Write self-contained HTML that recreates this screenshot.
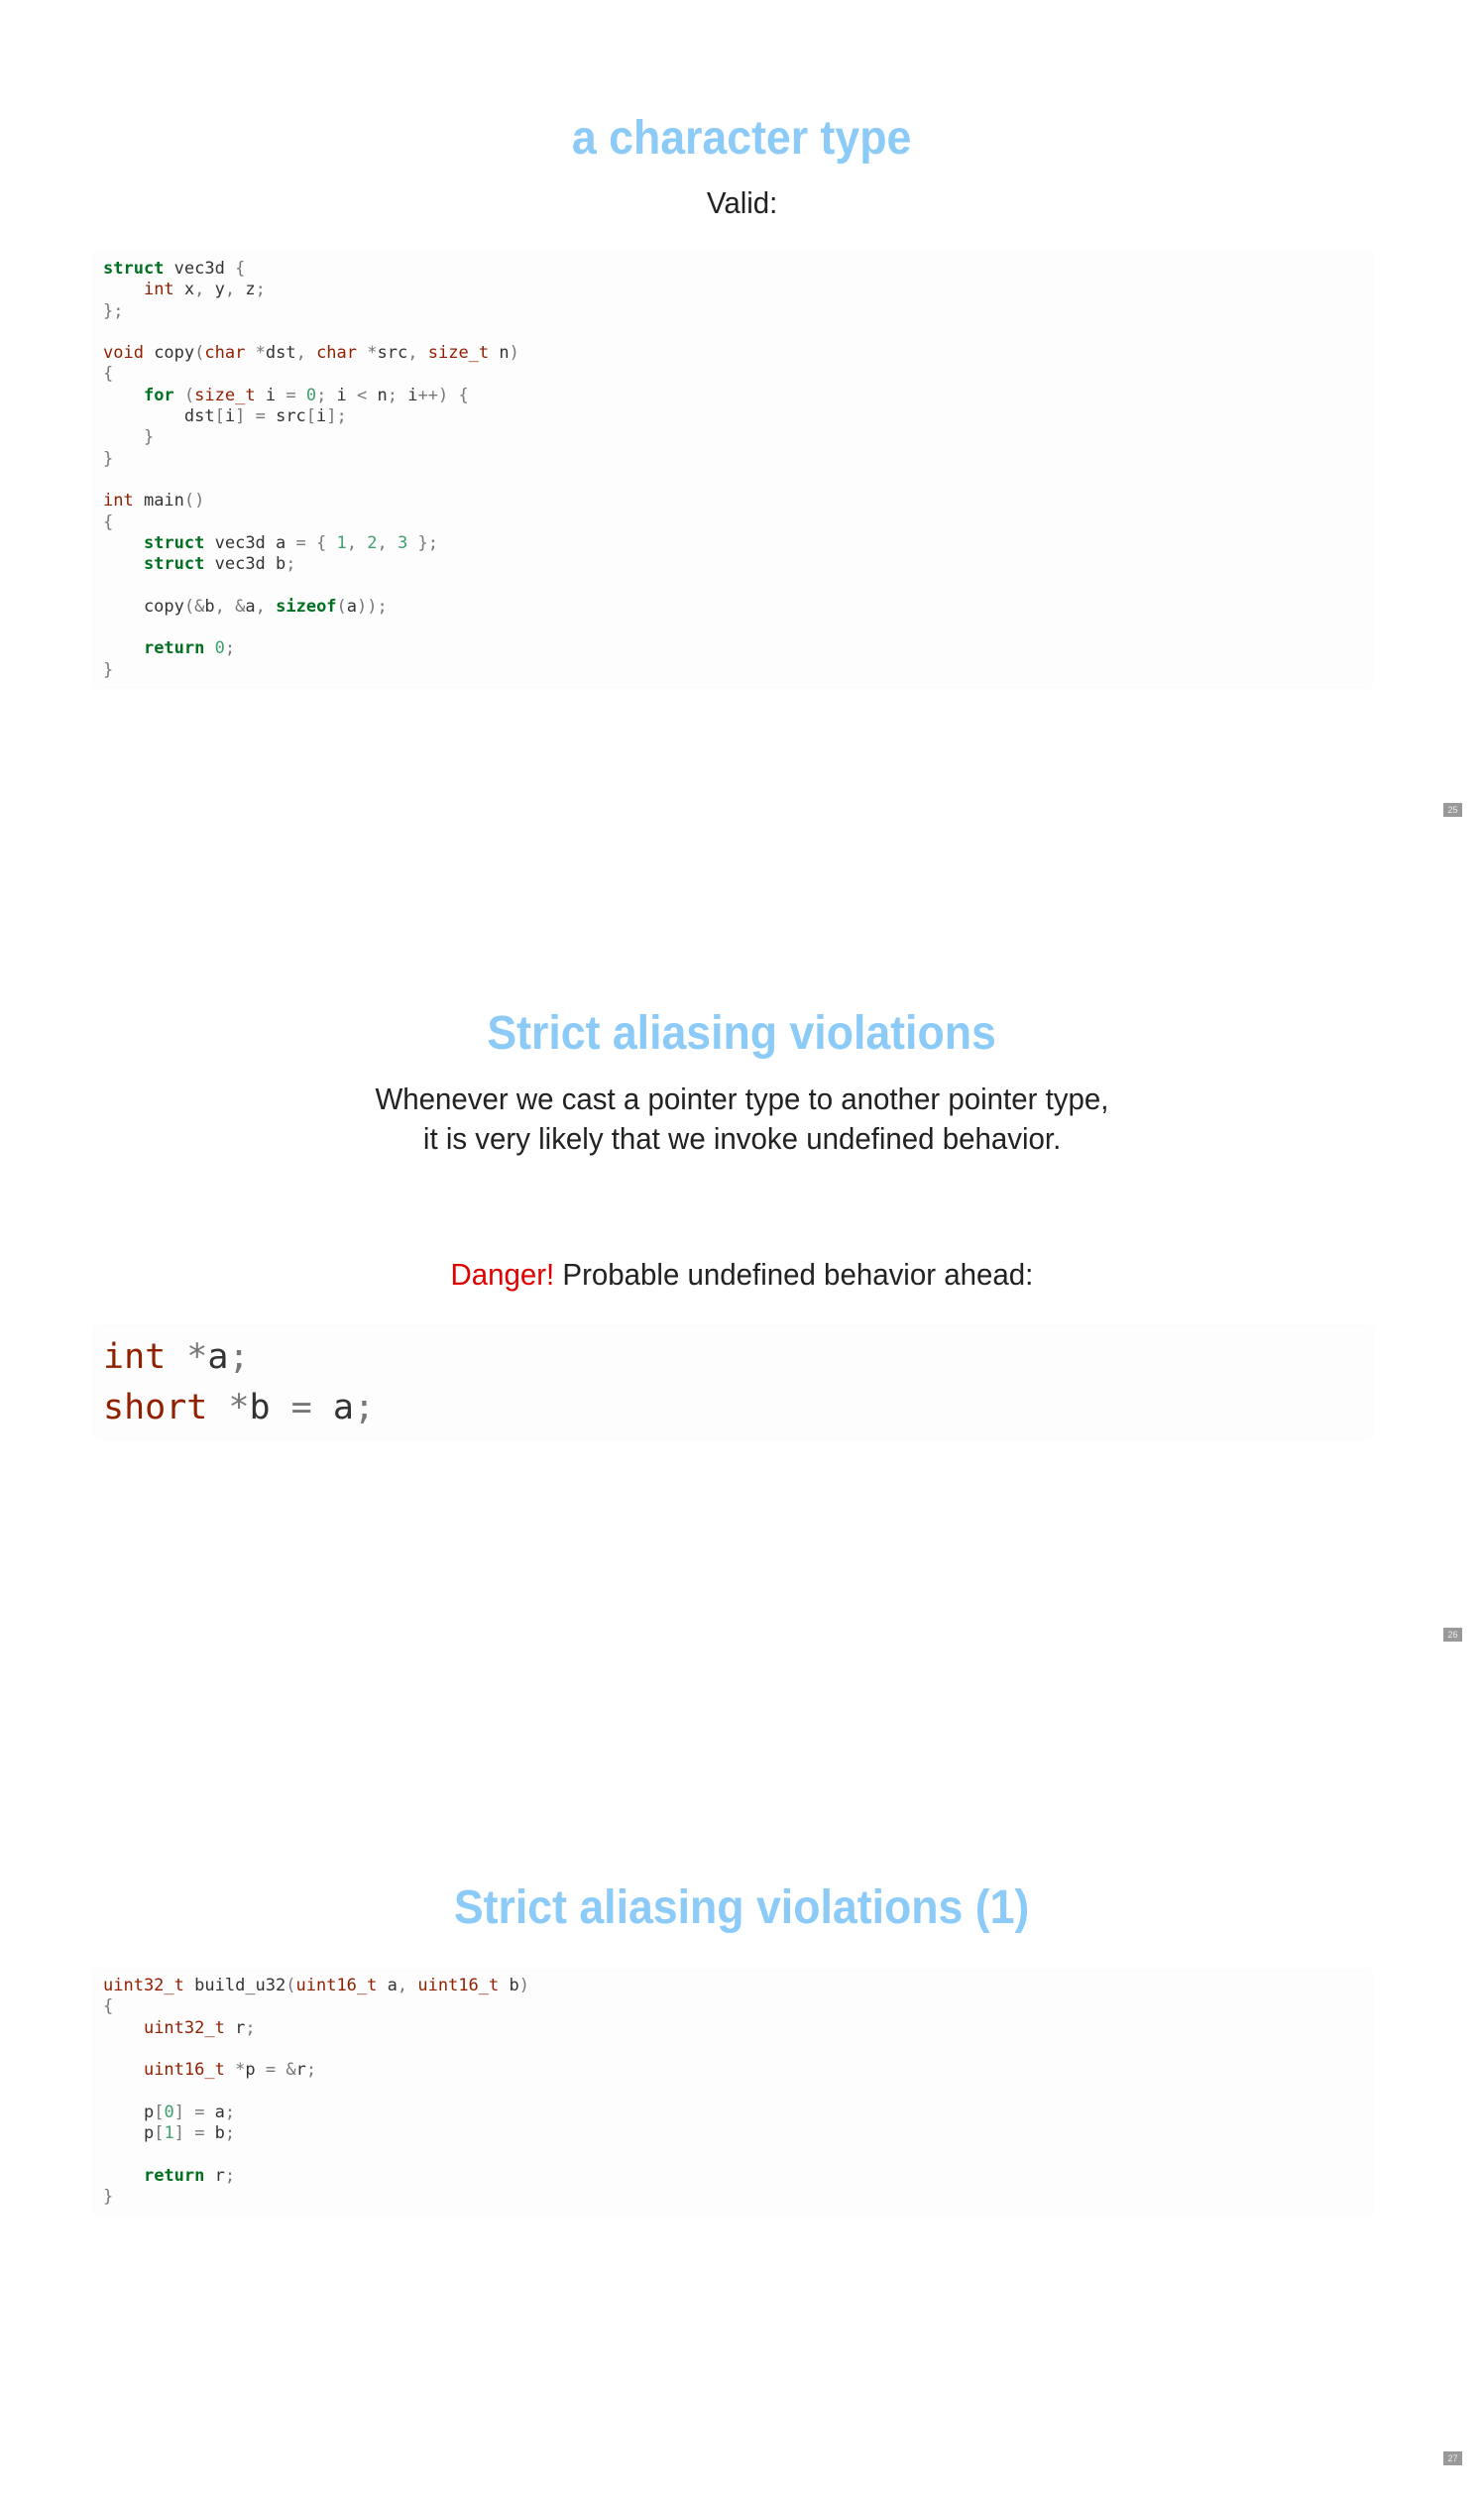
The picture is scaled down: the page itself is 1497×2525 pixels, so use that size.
<!DOCTYPE html>
<html><head><meta charset="utf-8">
<style>
html,body{margin:0;padding:0;background:#fff;}
body{width:1497px;height:2525px;position:relative;overflow:hidden;font-family:"Liberation Sans",sans-serif;}
.t{position:absolute;left:0;width:1497px;text-align:center;white-space:nowrap;}
.t span.s{display:inline-block;}
.title{color:#8ccbf7;font-weight:bold;font-size:48px;}
.title span.s{transform:scaleX(0.93);}
.body{color:#222;font-size:31px;}
.body span.s{transform:scaleX(0.95);}
.code{position:absolute;left:96px;width:1287px;background:#fdfdfd;box-shadow:0 0 6px rgba(0,0,0,0.04);}
pre{margin:0;font-family:"DejaVu Sans Mono","Liberation Mono",monospace;color:#333;}
.small pre{font-size:17px;line-height:21.3px;padding-left:8px;}
.big pre{font-size:35px;line-height:51px;padding-left:8px;}
.k{color:#007020;font-weight:bold;}
.ty{color:#902000;}
.n{color:#40a070;}
.p{color:#777;}
.pg{position:absolute;left:1456px;width:19px;height:14px;background:#999;color:#eee;font-size:9px;line-height:14px;text-align:center;}
</style></head><body>

<div class="t title" style="top:112px;"><span class="s">a character type</span></div>
<div class="t body" style="top:187px;"><span class="s">Valid:</span></div>

<div class="code small" style="top:255px;height:438px;"><pre style="padding-top:6px;"><span class="k">struct</span> vec3d <span class="p">{</span>
    <span class="ty">int</span> x<span class="p">,</span> y<span class="p">,</span> z<span class="p">;</span>
<span class="p">};</span>

<span class="ty">void</span> copy<span class="p">(</span><span class="ty">char</span> <span class="p">*</span>dst<span class="p">,</span> <span class="ty">char</span> <span class="p">*</span>src<span class="p">,</span> <span class="ty">size_t</span> n<span class="p">)</span>
<span class="p">{</span>
    <span class="k">for</span> <span class="p">(</span><span class="ty">size_t</span> i <span class="p">=</span> <span class="n">0</span><span class="p">;</span> i <span class="p">&lt;</span> n<span class="p">;</span> i<span class="p">++)</span> <span class="p">{</span>
        dst<span class="p">[</span>i<span class="p">]</span> <span class="p">=</span> src<span class="p">[</span>i<span class="p">];</span>
    <span class="p">}</span>
<span class="p">}</span>

<span class="ty">int</span> main<span class="p">()</span>
<span class="p">{</span>
    <span class="k">struct</span> vec3d a <span class="p">=</span> <span class="p">{</span> <span class="n">1</span><span class="p">,</span> <span class="n">2</span><span class="p">,</span> <span class="n">3</span> <span class="p">};</span>
    <span class="k">struct</span> vec3d b<span class="p">;</span>

    copy<span class="p">(&amp;</span>b<span class="p">,</span> <span class="p">&amp;</span>a<span class="p">,</span> <span class="k">sizeof</span><span class="p">(</span>a<span class="p">));</span>

    <span class="k">return</span> <span class="n">0</span><span class="p">;</span>
<span class="p">}</span></pre></div>

<div class="pg" style="top:810px;">25</div>

<div class="t title" style="top:1015px;"><span class="s">Strict aliasing violations</span></div>
<div class="t body" style="top:1091px;"><span class="s">Whenever we cast a pointer type to another pointer type,</span></div>
<div class="t body" style="top:1131px;"><span class="s">it is very likely that we invoke undefined behavior.</span></div>
<div class="t body" style="top:1268px;"><span class="s"><span style="color:#e00000">Danger!</span> Probable undefined behavior ahead:</span></div>

<div class="code big" style="top:1338px;height:112px;"><pre style="padding-top:6px;"><span class="ty">int</span> <span class="p">*</span>a<span class="p">;</span>
<span class="ty">short</span> <span class="p">*</span>b <span class="p">=</span> a<span class="p">;</span></pre></div>

<div class="pg" style="top:1642px;">26</div>

<div class="t title" style="top:1897px;"><span class="s">Strict aliasing violations (1)</span></div>

<div class="code small" style="top:1988px;height:245px;"><pre style="padding-top:5px;"><span class="ty">uint32_t</span> build_u32<span class="p">(</span><span class="ty">uint16_t</span> a<span class="p">,</span> <span class="ty">uint16_t</span> b<span class="p">)</span>
<span class="p">{</span>
    <span class="ty">uint32_t</span> r<span class="p">;</span>

    <span class="ty">uint16_t</span> <span class="p">*</span>p <span class="p">=</span> <span class="p">&amp;</span>r<span class="p">;</span>

    p<span class="p">[</span><span class="n">0</span><span class="p">]</span> <span class="p">=</span> a<span class="p">;</span>
    p<span class="p">[</span><span class="n">1</span><span class="p">]</span> <span class="p">=</span> b<span class="p">;</span>

    <span class="k">return</span> r<span class="p">;</span>
<span class="p">}</span></pre></div>

<div class="pg" style="top:2473px;">27</div>
</body></html>
